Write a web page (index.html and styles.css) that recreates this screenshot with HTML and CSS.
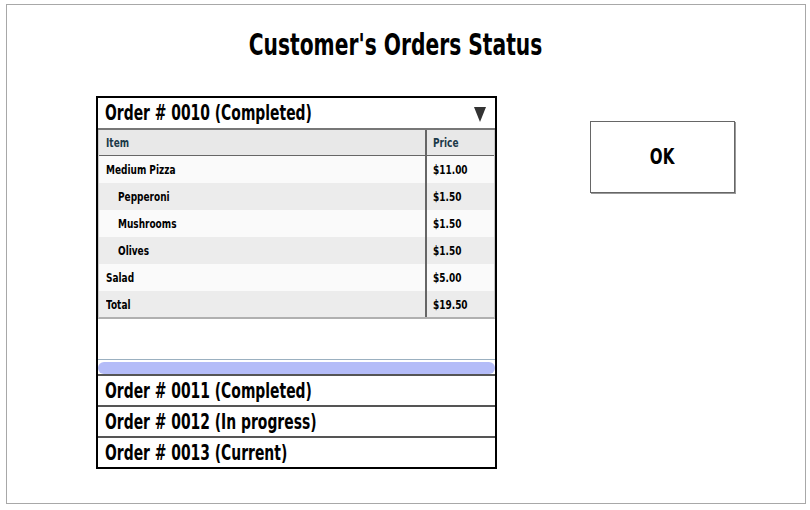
FILE: index.html
```html
<!DOCTYPE html>
<html>
<head>
<meta charset="utf-8">
<link rel="stylesheet" href="styles.css">
</head>
<body>
<div class="frame">
  <h1 class="title"><span class="sx">Customer's Orders Status</span></h1>
  <div class="content">
    <div class="accordion">
      <div class="acc-head">
        <span class="sx">Order # 0010 (Completed)</span>
        <svg class="caret" width="12" height="16" viewBox="0 0 12 16"><polygon points="0,1 12,1 6,16" fill="#333"/></svg>
      </div>
      <div class="acc-body">
        <div class="table">
          <div class="row head"><div class="c-item"><span class="sx">Item</span></div><div class="c-price"><span class="sx">Price</span></div></div>
          <div class="row odd"><div class="c-item"><span class="sx">Medium Pizza</span></div><div class="c-price"><span class="sx">$11.00</span></div></div>
          <div class="row even"><div class="c-item sub"><span class="sx">Pepperoni</span></div><div class="c-price"><span class="sx">$1.50</span></div></div>
          <div class="row odd"><div class="c-item sub"><span class="sx">Mushrooms</span></div><div class="c-price"><span class="sx">$1.50</span></div></div>
          <div class="row even"><div class="c-item sub"><span class="sx">Olives</span></div><div class="c-price"><span class="sx">$1.50</span></div></div>
          <div class="row odd"><div class="c-item"><span class="sx">Salad</span></div><div class="c-price"><span class="sx">$5.00</span></div></div>
          <div class="row even last"><div class="c-item"><span class="sx">Total</span></div><div class="c-price"><span class="sx">$19.50</span></div></div>
        </div>
        <div class="spacer"></div>
        <div class="scroll"><div class="thumb"></div></div>
      </div>
      <div class="acc-item"><span class="sx">Order # 0011 (Completed)</span></div>
      <div class="acc-item"><span class="sx">Order # 0012 (In progress)</span></div>
      <div class="acc-item final"><span class="sx">Order # 0013 (Current)</span></div>
    </div>
    <div class="ok"><span class="sx">OK</span></div>
  </div>
</div>
</body>
</html>
```
FILE: styles.css
```css
html, body {
  margin: 0;
  padding: 0;
  background: #fff;
}
body {
  font-family: "DejaVu Sans", "Liberation Sans", sans-serif;
  color: #000;
}
.sx {
  display: inline-block;
  white-space: nowrap;
  transform-origin: left center;
}
.frame {
  margin: 4px 0 0 6px;
  width: 798px;
  height: 498px;
  border: 1px solid #a8a8a8;
  box-sizing: content-box;
}
.title {
  margin: 0;
  padding: 22px 20px 0 0;
  height: 69px;
  line-height: 36px;
  font-size: 30px;
  font-weight: bold;
  text-align: center;
}
.title .sx {
  transform-origin: center center;
  transform: scaleX(0.675);
}
.content {
  display: flex;
  align-items: flex-start;
  padding-left: 89px;
  gap: 93px;
}
.accordion {
  width: 397px;
  border: 2px solid #000;
  display: flex;
  flex-direction: column;
}
.acc-head {
  height: 30px;
  display: flex;
  align-items: center;
  justify-content: space-between;
  padding: 0 9px 0 7px;
  font-size: 21px;
  font-weight: bold;
  border-bottom: 2px solid #777;
}
.acc-head .sx,
.acc-item .sx {
  transform: scaleX(0.662);
}
.caret {
  margin-top: 2px;
}
.acc-body {
  display: flex;
  flex-direction: column;
}
.table {
  border: 1px solid #c8c8c8;
  border-top: none;
  border-bottom: 2px solid #b0b0b0;
}
.row {
  display: flex;
  height: 27px;
  font-size: 13px;
  font-weight: bold;
}
.row .sx {
  transform: scaleX(0.69);
}
.row.head {
  height: 25px;
  background: #e8e8e8;
  color: #1c3a48;
  border-bottom: 1px solid #666;
}
.row.odd { background: #fafafa; }
.row.even { background: #ececec; }
.row.last { height: 26px; }
.c-item {
  flex: 1;
  display: flex;
  align-items: center;
  padding-left: 7px;
}
.c-item.sub { padding-left: 19px; }
.c-price {
  width: 61px;
  display: flex;
  align-items: center;
  padding-left: 6px;
  border-left: 2px solid #666;
}
.spacer {
  height: 40px;
}
.scroll {
  border-top: 1px solid #9bb0c0;
  padding-top: 2px;
}
.thumb {
  height: 12px;
  background: #b4bcf8;
  border-radius: 6px;
}
.acc-item {
  height: 29px;
  display: flex;
  align-items: center;
  padding-left: 7px;
  font-size: 21px;
  font-weight: bold;
  border-top: 2px solid #555;
}
.ok {
  margin-top: 25px;
  width: 143px;
  height: 70px;
  border: 1px solid #666;
  box-shadow: 1px 1px 0 #999;
  display: flex;
  align-items: center;
  justify-content: center;
  font-size: 21px;
  font-weight: bold;
}
.ok .sx {
  transform-origin: center center;
  transform: scaleX(0.72);
}
```
